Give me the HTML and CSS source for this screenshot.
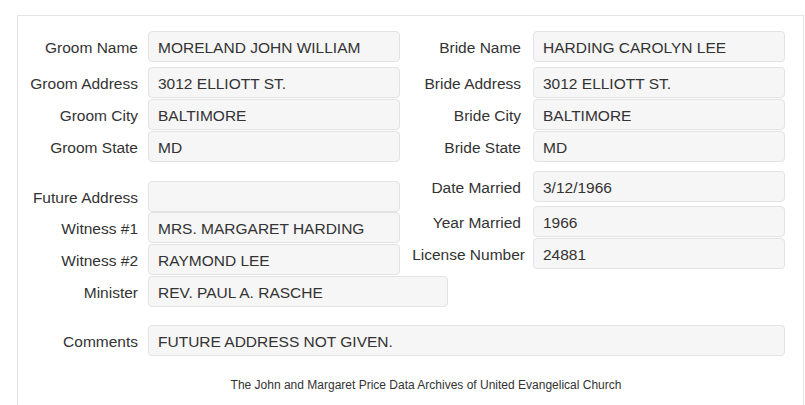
FILE: index.html
```html
<!DOCTYPE html>
<html lang="en">
<head>
  <meta charset="UTF-8">
  <title>Marriage Record</title>
  <link rel="stylesheet" href="styles.css">
</head>
<body>
  <div class="record">
    <div class="cols">
      <!-- Groom side -->
      <div class="col">
        <div class="row first"><span class="label">Groom Name</span><div class="field">MORELAND JOHN WILLIAM</div></div>
        <div class="row"><span class="label">Groom Address</span><div class="field">3012 ELLIOTT ST.</div></div>
        <div class="row"><span class="label">Groom City</span><div class="field">BALTIMORE</div></div>
        <div class="row"><span class="label">Groom State</span><div class="field">MD</div></div>
        <div class="row future"><span class="label">Future Address</span><div class="field"></div></div>
        <div class="row"><span class="label">Witness #1</span><div class="field">MRS. MARGARET HARDING</div></div>
        <div class="row"><span class="label">Witness #2</span><div class="field">RAYMOND LEE</div></div>
      </div>
      <!-- Bride side -->
      <div class="col right">
        <div class="row first"><span class="label">Bride Name</span><div class="field">HARDING CAROLYN LEE</div></div>
        <div class="row"><span class="label">Bride Address</span><div class="field">3012 ELLIOTT ST.</div></div>
        <div class="row"><span class="label">Bride City</span><div class="field">BALTIMORE</div></div>
        <div class="row"><span class="label">Bride State</span><div class="field">MD</div></div>
        <div class="row married first"><span class="label">Date Married</span><div class="field">3/12/1966</div></div>
        <div class="row"><span class="label">Year Married</span><div class="field">1966</div></div>
        <div class="row"><span class="label label-long">License Number</span><div class="field">24881</div></div>
      </div>
    </div>

    <div class="row"><span class="label">Minister</span><div class="field wide">REV. PAUL A. RASCHE</div></div>

    <div class="row comments"><span class="label">Comments</span><div class="field full">FUTURE ADDRESS NOT GIVEN.</div></div>

    <p class="footer">The John and Margaret Price Data Archives of United Evangelical Church</p>
  </div>
</body>
</html>
```

FILE: styles.css
```css
body {
  margin: 0;
  font-family: "Liberation Sans", Arial, sans-serif;
  font-size: 15.5px;
  color: #333;
  background: white;
}
.record {
  margin: 15px 0 0 17px;
  width: 768px;
  padding: 15px 17px 60px 0;
  border: 1px solid #e5e5e5;
  border-bottom: none;
}
.cols {
  display: flex;
}
.col {
  width: 382px;
  display: flex;
  flex-direction: column;
}
.col.right {
  width: 385px;
}
.row {
  display: flex;
  align-items: center;
  margin-bottom: 1px;
}
.row.first {
  margin-bottom: 5px;
}
.row.married {
  margin-bottom: 4px;
}
.row.future {
  margin-top: 18px;
  margin-bottom: 0;
}
.row.married {
  margin-top: 8px;
}
.label {
  width: 120px;
  padding: 2px 10px 0 0;
  text-align: right;
  flex-shrink: 0;
  white-space: nowrap;
}
.right .label {
  width: 121px;
  padding-right: 12px;
}
.right .label.label-long {
  padding-right: 8px;
  width: 125px;
}
.field {
  width: 252px;
  height: 31px;
  box-sizing: border-box;
  padding: 1px 9px 0;
  line-height: 29px;
  background: #f6f6f6;
  border: 1px solid #e3e3e3;
  border-radius: 4px;
  white-space: nowrap;
}
.field.wide {
  width: 300px;
}
.field.full {
  width: 637px;
}
.comments {
  margin-top: 18px;
}
.footer {
  margin: 22px 0 0;
  padding-left: 48px;
  text-align: center;
  font-size: 12px;
}
```
